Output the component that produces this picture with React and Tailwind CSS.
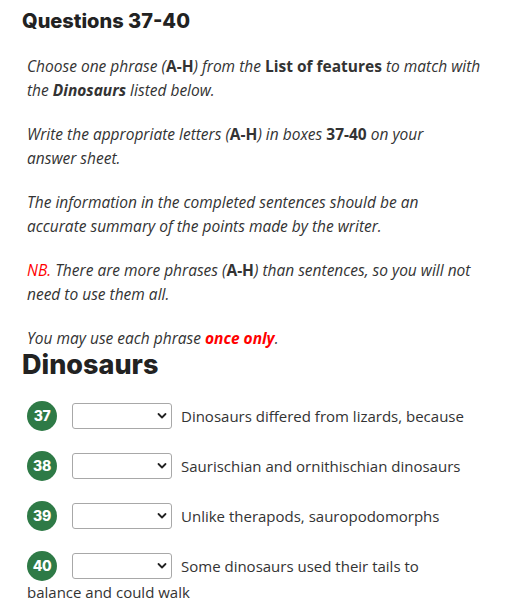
const body = { fontFamily: '"Open Sans", Lato, sans-serif' };
const head = { fontFamily: 'Inter, "Open Sans", sans-serif' };

const rows = [
  { n: 37, text: 'Dinosaurs differed from lizards, because' },
  { n: 38, text: 'Saurischian and ornithischian dinosaurs' },
  { n: 39, text: 'Unlike therapods, sauropodomorphs' },
  { n: 40, text: 'Some dinosaurs used their tails to balance and could walk' },
];

function Chevron() {
  return (
    <svg
      className="pointer-events-none absolute right-[5px] top-1/2 -translate-y-1/2"
      width="10"
      height="7"
      viewBox="0 0 10 7"
      fill="none"
    >
      <path d="M1.5 1.5 5 5l3.5-3.5" stroke="#222" strokeWidth="1.8" strokeLinecap="round" strokeLinejoin="round" />
    </svg>
  );
}

function Row({ n, text }) {
  return (
    <div className="pl-[5px] pr-[25px] text-[15px] leading-[26px] text-[#333]" style={body}>
      <span
        className="-my-[2px] inline-flex h-[30px] w-[30px] items-center justify-center rounded-full bg-[#2e7a46] align-top text-[14px] font-extrabold leading-none tracking-tight text-white"
        style={head}
      >
        {n}
      </span>
      <span className="relative ml-[15px] mr-[9px] inline-block h-[26px] w-[100px] align-top">
        <select className="block h-full w-full appearance-none rounded-[3px] border border-[#a8a8a8] bg-white" defaultValue="">
          <option value=""></option>
        </select>
        <Chevron />
      </span>
      {text}
    </div>
  );
}

export default function App() {
  return (
    <div className="min-h-[611px] bg-white pl-[22px] pr-[15px] pt-[7px] text-[#333]">
      <h2 className="text-[20px] font-extrabold leading-[28px] text-[#222]" style={head}>
        Questions 37-40
      </h2>

      <div className="mt-[19px] pl-[5px] text-[15.5px] italic leading-6 text-[#333]" style={body}>
        <p className="mb-5">
          Choose one phrase (<b className="not-italic">A-H</b>) from the{' '}
          <b className="not-italic">List of features</b> to match with the <b>Dinosaurs</b> listed below.
        </p>
        <p className="mb-5">
          Write the appropriate letters (<b className="not-italic">A-H</b>) in boxes{' '}
          <b className="not-italic">37-40</b> on your
          <br />
          answer sheet.
        </p>
        <p className="mb-5">
          The information in the completed sentences should be an
          <br />
          accurate summary of the points made by the writer.
        </p>
        <p className="mb-5">
          <span className="text-[#f00]">NB.</span> There are more phrases (<b className="not-italic">A-H</b>) than
          sentences, so you will not need to use them all.
        </p>
        <p>
          You may use each phrase <b className="text-[#f00]">once only</b>.
        </p>
      </div>

      <h2 className="-mt-px text-[27px] font-extrabold leading-[31px] text-[#222]" style={head}>
        Dinosaurs
      </h2>

      <div className="flex flex-col gap-6 pt-[23px]">
        {rows.map((r) => (
          <Row key={r.n} {...r} />
        ))}
      </div>
    </div>
  );
}
